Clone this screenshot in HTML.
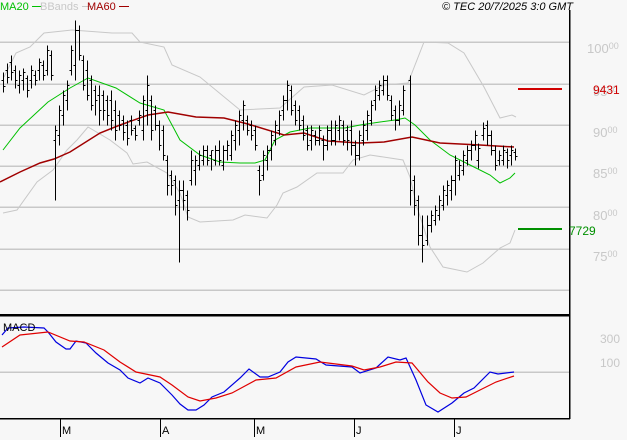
<!DOCTYPE html>
<html><head><meta charset="utf-8"><style>
html,body{margin:0;padding:0;background:#f7f7f7;}
body{width:627px;height:440px;position:relative;overflow:hidden;font-family:"Liberation Sans",sans-serif;}
.t{position:absolute;font-size:11px;line-height:12px;white-space:nowrap;}
.g{color:#c8c8c8;font-size:13px;}
.g sup{font-size:9px;vertical-align:4px;}
</style></head><body>
<svg width="627" height="440" style="position:absolute;left:0;top:0" shape-rendering="crispEdges">
<g stroke="#c8c8c8" stroke-width="1.5">
<line x1="0" y1="42" x2="569" y2="42"/><line x1="0" y1="84" x2="569" y2="84"/>
<line x1="0" y1="125" x2="569" y2="125"/><line x1="0" y1="166" x2="569" y2="166"/>
<line x1="0" y1="207" x2="569" y2="207"/><line x1="0" y1="249" x2="569" y2="249"/>
<line x1="0" y1="290" x2="569" y2="290"/><line x1="0" y1="372" x2="569" y2="372"/>
</g>
<line x1="569.5" y1="10" x2="569.5" y2="419" stroke="#000" stroke-width="1.5"/>
<line x1="0" y1="315" x2="570" y2="315" stroke="#000" stroke-width="2.5"/>
<line x1="0" y1="418.5" x2="570" y2="418.5" stroke="#000" stroke-width="1.5"/>
<g stroke="#000" stroke-width="1.2">
<line x1="60.5" y1="419" x2="60.5" y2="437"/><line x1="160.5" y1="419" x2="160.5" y2="437"/>
<line x1="254.5" y1="419" x2="254.5" y2="437"/><line x1="354.5" y1="419" x2="354.5" y2="437"/>
<line x1="454.5" y1="419" x2="454.5" y2="437"/>
</g>
<g fill="none" shape-rendering="auto">
<polyline stroke="#c8c8c8" stroke-width="1" points="4,77 16,53 30,47 44,33 72,30 112,33 132,33 140,42 164,47 172,65 200,77 240,110 280,108 304,87 332,85 364,95 384,85 408,83 424,42 448,43 464,53 484,87 500,118 512,115 516,117"/>
<polyline stroke="#c8c8c8" stroke-width="1" points="3,213 17,210 37,182 53,170 67,150 77,140 88,127 110,140 127,153 133,164 147,162 167,173 180,193 188,217 200,222 233,220 245,215 267,218 277,205 283,193 297,187 317,173 323,173 343,173 353,160 370,155 403,160 410,177 417,207 430,247 443,267 467,272 483,263 500,248 510,243 515,230"/>
<polyline stroke="#00c000" stroke-width="1" points="3,150 20,128 48,102 70,88 88,78 116,88 140,103 164,110 180,140 200,155 220,162 240,163 255,163 265,160 275,140 290,132 310,128 330,128 345,128 360,125 380,122 395,120 405,118 415,125 430,140 450,155 470,165 490,175 500,183 510,178 515,173"/>
<polyline stroke="#a00000" stroke-width="1.5" points="0,182 20,172 40,163 54,159 70,152 100,133 120,125 148,115 168,112 196,117 224,118 248,124 284,135 304,133 328,141 360,143 384,142 412,137 440,143 480,145 514,147"/>
<polyline stroke="#0000e0" stroke-width="1.2" points="2,335 8,328 24,327 44,328 48,332 56,342 66,349 70,349 76,341 86,343 96,353 108,363 120,370 128,378 140,383 148,378 160,383 172,395 180,404 188,410 196,410 204,405 212,397 224,392 240,378 249,369 260,377 268,377 280,372 288,362 296,357 316,359 326,365 352,367 360,373 376,368 388,357 400,360 406,358 416,380 426,405 438,412 452,403 464,393 474,388 490,372 498,374 514,372"/>
<polyline stroke="#e00000" stroke-width="1.2" points="2,347 20,335 48,332 70,341 84,342 104,350 120,362 136,372 160,377 172,385 188,397 200,401 216,398 232,393 256,380 276,378 296,367 320,362 352,366 364,370 380,367 396,362 412,363 428,382 440,393 452,398 466,397 480,390 496,382 514,376"/>
</g>
<line x1="518" y1="89" x2="562" y2="89" stroke="#d00000" stroke-width="2"/>
<line x1="518" y1="229" x2="562" y2="229" stroke="#009000" stroke-width="2"/>
<path transform="translate(0.5,0.5)" stroke="#000" stroke-width="1" fill="none" d="
M3 72V92M1 80h2M3 86h2 M7 63V83M5 70h2M7 77h2 M11 55V80M9 62h2M11 72h2 M15 65V88M13 70h2M15 80h2 M19 70V93M17 85h2M19 75h2 M23 68V90M21 80h2M23 72h2 M27 75V97M25 78h2M27 90h2 M31 65V88M29 80h2M31 70h2 M35 70V85M33 75h2M35 80h2 M39 58V80M37 70h2M39 62h2 M43 60V80M41 65h2M43 75h2 M47 45V75M45 70h2M47 50h2 M51 50V80M49 55h2M51 75h2
M55 125V200M53 140h2M55 130h2 M59 105V145M57 135h2M59 110h2 M63 90V125M61 115h2M63 95h2 M67 80V110M65 100h2M67 85h2 M71 45V75M69 70h2M71 50h2 M75 20V80M73 65h2M75 30h2 M79 25V60M77 30h2M79 55h2 M83 55V90M81 60h2M83 85h2 M87 60V100M85 70h2M87 95h2 M91 75V110M89 80h2M91 105h2 M95 85V115M93 90h2M95 100h2 M99 85V125M97 95h2M99 110h2 M103 90V120M101 95h2M103 110h2 M107 95V125M105 100h2M107 115h2 M111 90V130M109 100h2M111 120h2 M115 100V140M113 110h2M115 130h2 M119 110V130M117 115h2M119 125h2 M123 115V140M121 120h2M123 132h2 M127 120V145M125 125h2M127 138h2 M131 115V135M129 120h2M131 130h2 M135 125V140M133 128h2M135 135h2 M139 110V125M137 120h2M139 115h2 M143 95V140M141 130h2M143 100h2 M147 75V125M145 110h2M147 85h2 M151 95V140M149 100h2M151 130h2 M155 105V130M153 110h2M155 125h2 M159 120V150M157 125h2M159 145h2 M163 125V160M161 130h2M163 155h2
M167 155V195M165 160h2M167 185h2 M171 170V195M169 175h2M171 185h2 M175 175V215M173 180h2M175 205h2 M179 180V262M177 200h2M179 190h2 M183 180V210M181 190h2M183 200h2 M187 190V220M185 195h2M187 210h2 M191 150V185M189 180h2M191 160h2 M195 155V185M193 170h2M195 160h2 M199 150V170M197 165h2M199 155h2 M203 145V165M201 160h2M203 150h2 M207 145V165M205 150h2M207 160h2 M211 150V170M209 155h2M211 150h2 M215 145V165M213 160h2M215 150h2 M219 140V165M217 150h2M219 160h2 M223 145V170M221 165h2M223 150h2 M227 140V160M225 150h2M227 145h2 M231 130V160M229 155h2M231 135h2 M235 120V150M233 140h2M235 125h2 M239 110V145M237 130h2M239 115h2 M243 100V130M241 120h2M243 105h2 M247 115V135M245 120h2M247 130h2 M251 120V140M249 125h2M251 135h2 M255 125V150M253 130h2M255 145h2
M259 165V195M257 170h2M259 180h2 M263 150V180M261 175h2M263 155h2 M267 145V170M265 160h2M267 150h2 M271 130V160M269 150h2M271 135h2 M275 120V145M273 140h2M275 125h2 M279 110V135M277 130h2M279 115h2 M283 95V120M281 110h2M283 100h2 M287 80V110M285 100h2M287 85h2 M291 85V115M289 90h2M291 110h2 M295 100V125M293 105h2M295 120h2 M299 105V130M297 110h2M299 125h2 M303 115V140M301 120h2M303 135h2 M307 125V150M305 130h2M307 145h2 M311 125V150M309 140h2M311 130h2 M315 130V145M313 135h2M315 140h2 M319 125V145M317 140h2M319 130h2 M323 135V160M321 140h2M323 145h2 M327 125V150M325 145h2M327 130h2 M331 120V145M329 130h2M331 140h2 M335 120V145M333 140h2M335 125h2 M339 115V140M337 130h2M339 120h2 M343 120V145M341 125h2M343 140h2 M347 125V150M345 130h2M347 140h2 M351 120V155M349 130h2M351 145h2 M355 140V165M353 145h2M355 155h2 M359 130V160M357 155h2M359 135h2 M363 120V145M361 140h2M363 125h2 M367 110V140M365 130h2M367 115h2 M371 100V125M369 120h2M371 105h2 M375 85V110M373 100h2M375 90h2 M379 80V100M377 95h2M379 85h2 M383 75V95M381 90h2M383 80h2 M387 75V100M385 80h2M387 95h2 M391 95V120M389 100h2M391 115h2 M395 105V130M393 110h2M395 120h2 M399 100V125M397 120h2M399 105h2 M403 85V115M401 110h2M403 90h2
M410 75V205M408 80h2M410 190h2 M414 175V215M412 180h2M414 205h2 M418 195V245M416 200h2M418 235h2 M422 215V262M420 235h2M422 245h2 M427 215V245M425 240h2M427 225h2 M431 210V232M429 225h2M431 215h2 M435 205V225M433 220h2M435 210h2 M439 195V220M437 215h2M439 200h2 M443 185V210M441 205h2M443 190h2 M447 180V205M445 195h2M447 185h2 M451 175V200M449 190h2M451 180h2 M455 155V195M453 180h2M455 160h2 M459 160V180M457 175h2M459 165h2 M463 150V175M461 170h2M463 155h2 M467 145V165M465 160h2M467 150h2 M471 140V160M469 150h2M471 145h2 M475 130V150M473 145h2M475 135h2 M478 143V168M476 160h2M478 148h2 M483 122V140M481 135h2M483 128h2 M487 120V145M485 125h2M487 135h2 M491 130V155M489 135h2M491 150h2 M495 145V170M493 150h2M495 165h2 M499 150V165M497 160h2M499 155h2 M503 145V165M501 160h2M503 150h2 M507 148V168M505 152h2M507 160h2 M511 145V165M509 155h2M511 150h2 M515 148V160M513 152h2M515 156h2"/>
</svg>
<div class="t" style="left:0;top:1px;color:#00c000">MA20 <span style="display:inline-block;width:10px;border-top:1.5px solid #00c000;vertical-align:3px"></span></div>
<div class="t" style="left:40px;top:1px;color:#c8c8c8">BBands <span style="display:inline-block;width:10px;border-top:1.5px solid #c8c8c8;vertical-align:3px"></span></div>
<div class="t" style="left:87px;top:1px;color:#a00000">MA60 <span style="display:inline-block;width:10px;border-top:1.5px solid #a00000;vertical-align:3px"></span></div>
<div class="t" style="right:54px;top:1px;color:#000;font-style:italic">© TEC 20/7/2025 3:0 GMT</div>
<div class="t g" style="left:587px;top:40px">100<sup>00</sup></div>
<div class="t g" style="left:593px;top:83px">95<sup>00</sup></div>
<div class="t g" style="left:593px;top:124px">90<sup>00</sup></div>
<div class="t g" style="left:593px;top:165px">85<sup>00</sup></div>
<div class="t g" style="left:593px;top:207px">80<sup>00</sup></div>
<div class="t g" style="left:593px;top:248px">75<sup>00</sup></div>
<div class="t" style="left:593px;top:84px;color:#d00000;font-size:12px">9431</div>
<div class="t" style="left:569px;top:225px;color:#009000;font-size:12px">7729</div>
<div class="t g" style="left:600px;top:333px;font-size:12px">300</div>
<div class="t g" style="left:600px;top:357px;font-size:12px">100</div>
<div class="t" style="left:3px;top:322px;color:#000">MACD</div>
<div class="t" style="left:62px;top:425px;color:#000">M</div>
<div class="t" style="left:162px;top:425px;color:#000">A</div>
<div class="t" style="left:256px;top:425px;color:#000">M</div>
<div class="t" style="left:356px;top:425px;color:#000">J</div>
<div class="t" style="left:456px;top:425px;color:#000">J</div>
</body></html>
